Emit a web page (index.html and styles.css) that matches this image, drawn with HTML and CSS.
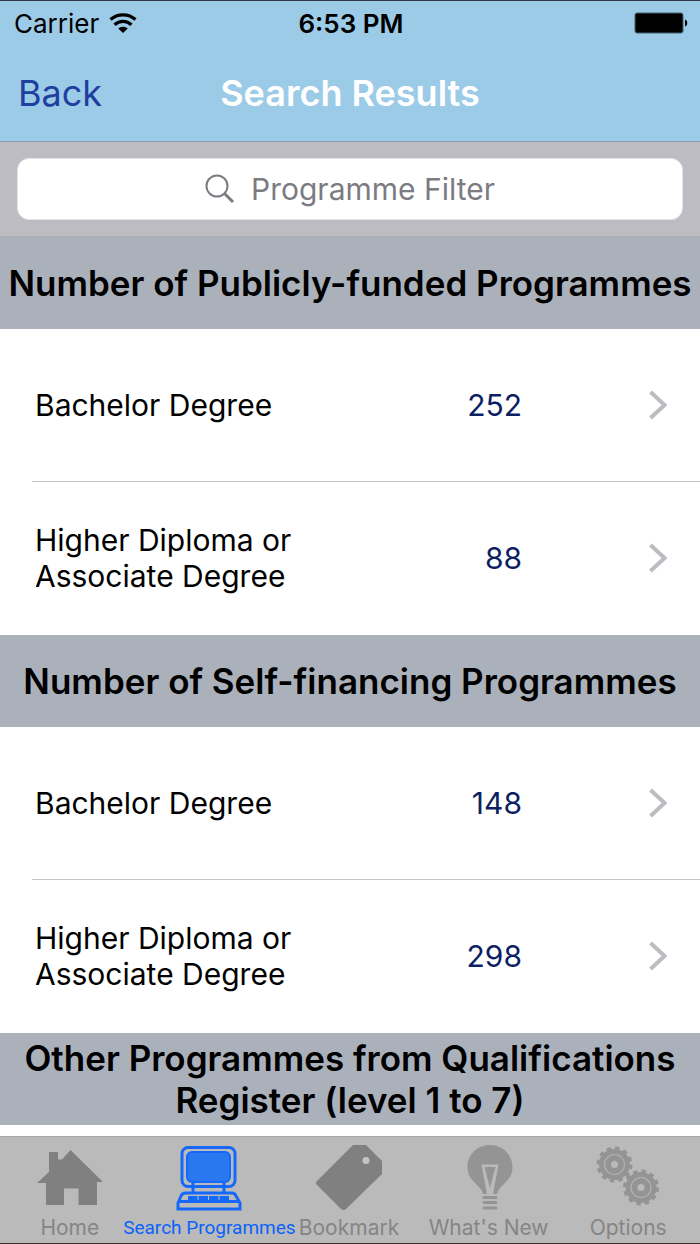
FILE: index.html
```html
<!DOCTYPE html>
<html lang="en">
<head>
    <meta charset="UTF-8">
    <meta name="viewport" content="width=device-width, initial-scale=1.0">
    <title>Search Results</title>

    <link rel="stylesheet" href="styles.css">
</head>
<body>

    <header class="header">
        <div class="status">
            <div class="carrier">
                <span>Carrier</span>
                <svg width="28" height="20" viewBox="0 0 28 20" aria-hidden="true">
                    <g fill="none" stroke="#000" stroke-width="3.2">
                        <path d="M1.5 6.500C8.500 .2 19.500 .2 26.500 6.500"/>
                        <path d="M5.500 11.700C10.500 7.200 17.500 7.200 22.500 11.700"/>
                    </g>
                    <path d="M9.200 15.500C12 13 16 13 18.800 15.500L14 20z"/>
                </svg>
            </div>
            <span class="time">6:53 PM</span>
            <svg class="battery" width="54" height="22" viewBox="0 0 54 22" aria-hidden="true">
                <rect x="1" y="1" width="48" height="20" rx="2" stroke="#44606f" stroke-width="1"/>
                <path d="M51 7.500c3 .5 3 6.500 0 7z"/>
            </svg>
        </div>
        <nav class="navbar">
            <a class="back" href="#">Back</a>
            <h1>Search Results</h1>
        </nav>
    </header>

    <form class="search">
        <label class="search-box">
            <svg width="30" height="30" viewBox="0 0 30 30" fill="none" stroke="#7b7b82" aria-hidden="true">
                <circle cx="12" cy="12" r="10.500" stroke-width="2"/>
                <path d="M19.500 19.500L28 28" stroke-width="3"/>
            </svg>
            <input type="search" name="filter" placeholder="Programme Filter" aria-label="Programme Filter">
        </label>
    </form>

    <main class="results">
        <section>
            <h2>Number of Publicly-funded Programmes</h2>
            <a class="row" href="#">
                <span class="name">Bachelor Degree</span>
                <span class="count">252</span>
                <svg class="arrow" width="20" height="30" viewBox="0 0 20 30" aria-hidden="true"><path d="M3.500 2L17.500 15L3.500 28"/></svg>
            </a>
            <a class="row" href="#">
                <span class="name">Higher Diploma or<br>Associate Degree</span>
                <span class="count">88</span>
                <svg class="arrow" width="20" height="30" viewBox="0 0 20 30" aria-hidden="true"><path d="M3.500 2L17.500 15L3.500 28"/></svg>
            </a>
        </section>

        <section>
            <h2>Number of Self-financing Programmes</h2>
            <a class="row" href="#">
                <span class="name">Bachelor Degree</span>
                <span class="count">148</span>
                <svg class="arrow" width="20" height="30" viewBox="0 0 20 30" aria-hidden="true"><path d="M3.500 2L17.500 15L3.500 28"/></svg>
            </a>
            <a class="row" href="#">
                <span class="name">Higher Diploma or<br>Associate Degree</span>
                <span class="count">298</span>
                <svg class="arrow" width="20" height="30" viewBox="0 0 20 30" aria-hidden="true"><path d="M3.500 2L17.500 15L3.500 28"/></svg>
            </a>
        </section>

        <section>
            <h2>Other Programmes from Qualifications Register (level 1 to 7)</h2>
        </section>
    </main>

    <nav class="tabs">
        <a class="tab" href="#">
            <svg width="66" height="66" viewBox="0 0 66 66" fill="#808080" aria-hidden="true">
                <path d="M0 38L12 27V7H21V14.500H25L33.500 5L65 36V37H60V60H41.500V43.500H27V60H9V38z"/>
            </svg>
            <span>Home</span>
        </a>
        <a class="tab active" href="#">
            <svg width="66" height="66" viewBox="0 0 66 66" fill="none" stroke="#1568fa" stroke-width="3" aria-hidden="true">
                <rect x="6" y="2.500" width="53" height="39" rx="6"/>
                <rect x="11" y="7" width="43" height="30" rx="5" fill="#2a78ef" stroke-width="2"/>
                <path d="M17 38V48M48 38V48"/>
                <path d="M10 48H56Q59 48 60 51L64 58V64H2V58L5 51Q6 48 10 48zM2 56.500H64"/>
                <path d="M12 53.500H53" stroke-width="5" stroke-dasharray="9.500 1"/>
            </svg>
            <span>Search Programmes</span>
        </a>
        <a class="tab" href="#">
            <svg width="66" height="66" viewBox="0 0 66 66" aria-hidden="true">
                <path fill="#808080" d="M37 0H50L66 16V29L30 64Q27.500 66 25 64L1 40Q-1 38 1 36z"/>
                <circle cx="50" cy="15.500" r="3.500" fill="#c4c4c4"/>
            </svg>
            <span>Bookmark</span>
        </a>
        <a class="tab" href="#">
            <svg width="66" height="66" viewBox="0 0 66 66" aria-hidden="true">
                <path fill="#949494" d="M34 0C47 0 56.500 10 56.500 22C56.500 30 53 34 48 39C44 43 42 45 41 49H27C26 45 24 43 20 39C14 33 11.500 29 11.500 22C11.500 10 21 0 34 0z"/>
                <path fill="#bababa" d="M25.500 19.500H42.500L37 49H31z"/>
                <path fill="#949494" d="M28.500 22H39.500L34 43z"/>
                <path stroke="#949494" stroke-width="3" stroke-linecap="round" d="M28 52.500H40M28 57.500H40M28 63H40"/>
            </svg>
            <span>What's New</span>
        </a>
        <a class="tab" href="#">
            <svg width="66" height="66" viewBox="0 0 66 66" fill="none" aria-hidden="true">
                <g stroke="#949494">
                    <circle cx="19.500" cy="19.500" r="9.500" stroke-width="12"/>
                    <circle cx="19.500" cy="19.500" r="16" stroke-width="4" stroke-dasharray="4.400 3.980"/>
                    <circle cx="46" cy="42.500" r="9.500" stroke-width="12"/>
                    <circle cx="46" cy="42.500" r="16" stroke-width="4" stroke-dasharray="4.400 3.980"/>
                </g>
                <g stroke="#b4b4b4" stroke-width="1.200">
                    <circle cx="19.500" cy="19.500" r="10"/>
                    <circle cx="46" cy="42.500" r="10"/>
                </g>
            </svg>
            <span>Options</span>
        </a>
    </nav>

</body>
</html>
```
FILE: styles.css
```css
* {
    box-sizing: border-box;
}
body {
    margin: 0;
    min-height: 100vh;
    display: flex;
    flex-direction: column;
    background: #fff;
    color: #000;
    font-family: Inter, Roboto, sans-serif;
    border-bottom: 1px solid #333;
}
a {
    color: inherit;
    text-decoration: none;
}
svg {
    display: block;
    flex: none;
}

/* top bars */
.header {
    background: #9ccbe8;
    border-top: 1px solid #333844;
    border-bottom: 1px solid #8b9ca8;
}
.status {
    display: grid;
    grid-template-columns: 1fr auto 1fr;
    align-items: center;
    height: 44px;
    padding: 0 12px 0 14px;
    font-size: 26px;
}
.carrier {
    display: flex;
    align-items: center;
    gap: 10px;
}
.time {
    font-weight: 600;
}
.battery {
    justify-self: end;
}
.navbar {
    display: grid;
    grid-template-columns: 1fr auto 1fr;
    align-items: center;
    height: 96px;
    padding: 0 18px;
}
.back {
    color: #1f3f9f;
    font-size: 36px;
}
h1 {
    margin: 0;
    color: #fff;
    font-size: 36px;
    font-weight: 600;
}

/* filter */
.search {
    padding: 16px 17px;
    background: #bdbcc2;
    border-bottom: 1px solid #adadb0;
}
.search-box {
    display: flex;
    justify-content: center;
    align-items: center;
    gap: 16px;
    height: 62px;
    background: #fff;
    border: 1px solid #e4e4e8;
    border-radius: 12px;
}
.search-box input {
    width: 244px;
    padding: 0;
    border: none;
    outline: none;
    background: none;
    font-family: inherit;
    font-size: 30px;
    appearance: none;
}
.search-box input::-webkit-search-cancel-button {
    display: none;
}
.search-box input::placeholder {
    color: #7b7b82;
}

/* list */
.results {
    flex: 1;
}
h2 {
    display: flex;
    justify-content: center;
    align-items: center;
    min-height: 92px;
    margin: 0;
    padding: 4px 0;
    background: #abb1bb;
    font-size: 35px;
    font-weight: 600;
    line-height: 42px;
    text-align: center;
}
.row {
    display: grid;
    grid-template-columns: 1fr 120px 145px;
    align-items: center;
    height: 153px;
    margin-left: 32px;
    padding: 0 33px 0 3px;
    font-size: 30px;
    line-height: 36px;
    border-bottom: 1px solid #c3c3c6;
}
.row:last-child {
    border-bottom-color: transparent;
}
.count {
    color: #0d1f63;
    text-align: right;
}
.arrow {
    justify-self: end;
    fill: none;
    stroke: #bdbcc3;
    stroke-width: 4;
}

/* bottom tabs */
.tabs {
    display: grid;
    grid-template-columns: repeat(5, minmax(0, 1fr));
    height: 107px;
    padding-right: 2px;
    background: #bababa;
    border-top: 1px solid #a8a8a8;
}
.tab {
    display: flex;
    flex-direction: column;
    align-items: center;
    gap: 4px;
    padding-top: 8px;
    color: #858585;
    font-size: 21px;
    line-height: 26px;
    white-space: nowrap;
}
.tab.active {
    color: #0b62fb;
    font-family: Roboto, sans-serif;
    font-size: 19px;
}
```
